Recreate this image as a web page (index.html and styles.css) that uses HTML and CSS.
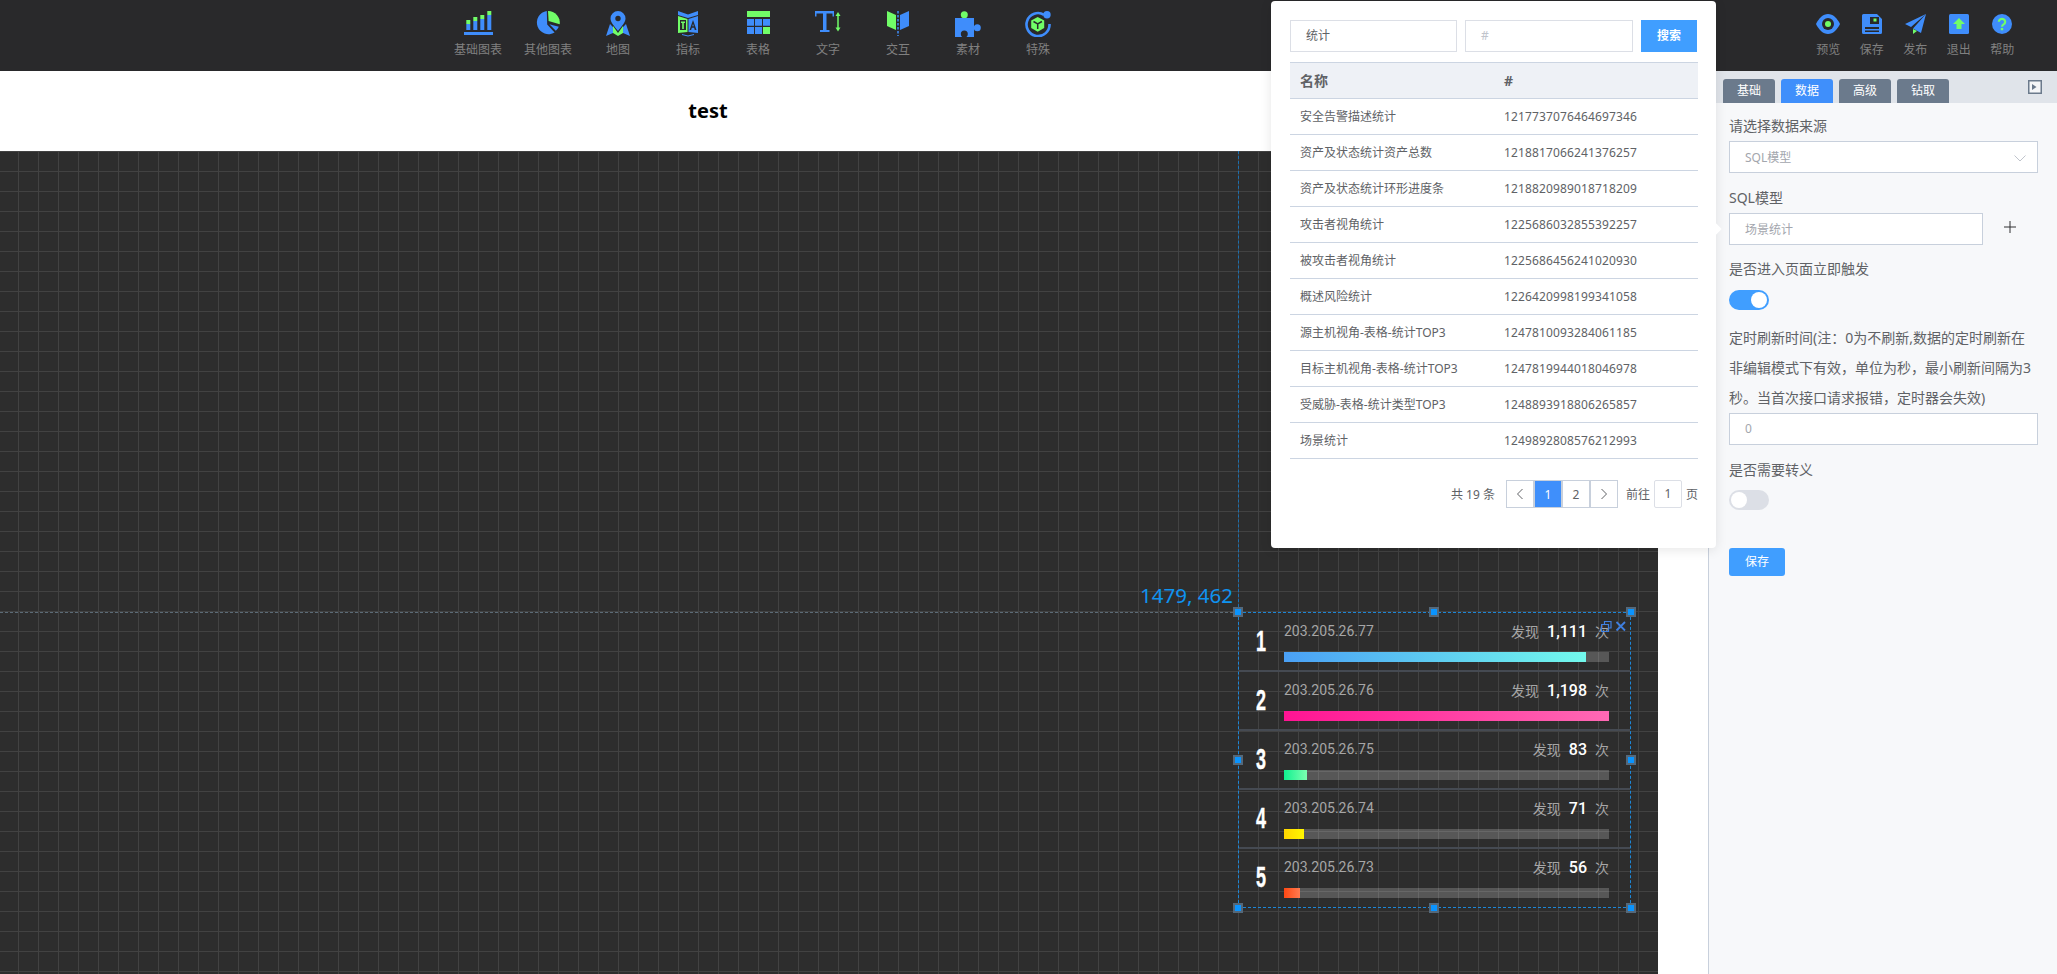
FILE: index.html
```html
<!DOCTYPE html>
<html lang="zh">
<head>
<meta charset="utf-8">
<title>test</title>
<link rel="stylesheet" href="styles.css">
</head>
<body>
<header class="topbar">
  <nav class="tools">
    <div class="tool"><svg class="ico" width="29" height="26" viewBox="0 0 29 26"><path class="g" d="M2.3 9h4v4h-4zM9.3 6h4v4h-4zM16.3 4h4v4h-4zM23.3 0h4v4h-4z"/><path class="b" d="M2.3 13h4v6h-4zM9.3 10h4v9h-4zM16.3 8h4v11h-4zM23.3 4h4v15h-4zM0 21h29v3H0z"/></svg><span>基础图表</span></div>
    <div class="tool"><svg class="ico" width="24" height="26" viewBox="0 0 24 26"><path class="b" d="M10.8 0A11.7 11.7 0 1 0 18.6 21.6L11.2 13.4z"/><path class="g" d="M12 0A11.7 11.7 0 0 1 23.7 13.2L12.6 10z"/><path class="b" d="M13.4 13.2L22.8 15.8A11.7 11.7 0 0 1 19.8 19.8z"/></svg><span>其他图表</span></div>
    <div class="tool"><svg class="ico" width="24" height="26" viewBox="0 0 24 26"><path class="b" d="M4 13L0 25l7-3 0-6zM20 13l4 12-7-3 0-6z"/><path class="g" d="M7 15l5 7 5-7v7l-5 3-5-3z"/><path class="b" d="M12 0a7.5 7.5 0 0 1 7.5 7.5c0 4-4 8-7.5 12.5C8.500 15.500 4.500 11.500 4.500 7.500A7.500 7.500 0 0 1 12 0z"/><circle class="d" cx="12" cy="7.500" r="2.700"/></svg><span>地图</span></div>
    <div class="tool"><svg class="ico" width="20" height="26" viewBox="0 0 20 26"><path class="b" d="M0 0l10 3.500L20 0v4L10 7 0 4z"/><path class="g" d="M0 5l9.500 3v13L0 22z"/><path class="b" d="M20 5l-9.500 3v13l9.500 1z"/><rect class="d" x="2" y="9" width="6" height="10"/><path class="g" d="M3 10.500h4v1.500H5.800v6H4.200v-6H3z"/><path class="d" d="M15 9l3.500 10h-1.700l-.7-2.200h-2.300l-.7 2.200h-1.500zM14.300 15.300h1.500L15 12.800z"/><path class="line-b" d="M4 23.500q6 3 12 0"/></svg><span>指标</span></div>
    <div class="tool"><svg class="ico" width="23" height="26" viewBox="0 0 23 26"><path class="g" d="M0 0h23v6H0zM16 16h7v7h-7z"/><path class="b" d="M0 8h7v6.700H0zM8 8h7v6.700H8zM16 8h7v6.700h-7zM0 16h7v7H0zM8 16h7v7H8z"/></svg><span>表格</span></div>
    <div class="tool"><svg class="ico" width="26" height="26" viewBox="0 0 26 26"><path class="b" d="M0 0h19v5.500h-1.500V2.500h-6V19h3v2H5v-2h3V2.500H1.500v3H0z"/><path class="line-g" d="M23 3v15"/><path class="g" d="M23 1l2.500 4h-5zM23 20.500l-2.500-4h5z"/></svg><span>文字</span></div>
    <div class="tool"><svg class="ico" width="22" height="26" viewBox="0 0 22 26"><path class="g" d="M0 0l9 4v15l-9-4z"/><path class="b" d="M22 0l-9 4v15l9-4z"/><path class="dash-b" d="M11 0v25"/></svg><span>交互</span></div>
    <div class="tool"><svg class="ico" width="26" height="26" viewBox="0 0 26 26"><circle class="g" cx="9.300" cy="3.700" r="3.500"/><path class="b" d="M0 7h19v19H0z"/><circle class="b" cx="22.300" cy="16.700" r="3.500"/><circle class="d" cx="9.300" cy="23" r="3.500"/></svg><span>素材</span></div>
    <div class="tool"><svg class="ico" width="26" height="26" viewBox="0 0 26 26"><path class="ring" d="M19 3.800A11.500 11.500 0 1 0 24.500 13"/><circle class="b" cx="22" cy="3.700" r="3.700"/><path class="g" d="M12.700 6l6.500 3.500v7.500l-6.500 3.700-6.500-3.700V9.500z"/><path class="line-d" d="M8.500 10.500l4.200 2.300 4.200-2.300M12.700 12.800v5.200"/></svg><span>特殊</span></div>
  </nav>
  <nav class="actions">
    <div class="action"><svg width="24" height="20" viewBox="0 0 24 20"><path class="b" d="M0 10C3 4 7 0 12 0s9 4 12 10c-3 6-7 10-12 10S3 16 0 10z"/><circle class="d" cx="12" cy="10" r="6"/><circle class="g" cx="12" cy="10" r="3"/></svg><span>预览</span></div>
    <div class="action"><svg width="20" height="20" viewBox="0 0 20 20"><path class="b" d="M1.500 0H15l5 5v13.500a1.500 1.500 0 0 1-1.500 1.500h-17A1.500 1.500 0 0 1 0 18.500v-17A1.500 1.500 0 0 1 1.500 0z"/><path class="d" d="M8 3h9v7H8zM3 13h14v2H3zM3 16.500h14v1.500H3z"/><rect class="g" x="11.500" y="4.500" width="3" height="3"/></svg><span>保存</span></div>
    <div class="action"><svg width="21" height="20" viewBox="0 0 21 20"><path class="b" d="M21 0L0 10l6 3zM21 0L8 14.500 16 19z"/><path class="g" d="M8 15v5l4-3z"/></svg><span>发布</span></div>
    <div class="action"><svg width="20" height="20" viewBox="0 0 20 20"><rect class="b" width="20" height="20" rx="1.500"/><path class="g" d="M10 4l6 6h-3.500v5h-5v-5H4z"/></svg><span>退出</span></div>
    <div class="action"><svg width="20" height="20" viewBox="0 0 20 20"><circle class="b" cx="10" cy="10" r="10"/><path class="line-help" d="M6.800 7.800a3.200 3 0 1 1 4.800 2.600c-1 .6-1.600 1.100-1.600 2.400"/><rect class="g" x="8.800" y="14" width="2.400" height="2.300"/></svg><span>帮助</span></div>
  </nav>
</header>

<main class="workspace">
  <section class="stage">
    <div class="title-band"><h1>test</h1></div>
    <div class="canvas">
      <div class="guide guide-v"></div>
      <div class="guide guide-h"></div>
      <div class="coords">1479, 462</div>
      <div class="widget">
        <div class="row">
          <div class="rank"><b>1</b></div>
          <div class="row-body">
            <div class="row-text"><span class="ip">203.205.26.77</span><span class="stat">发现<strong>1,111</strong>次</span></div>
            <div class="track"><div class="fill fill-1" style="width:93%"></div></div>
          </div>
        </div>
        <div class="row">
          <div class="rank"><b>2</b></div>
          <div class="row-body">
            <div class="row-text"><span class="ip">203.205.26.76</span><span class="stat">发现<strong>1,198</strong>次</span></div>
            <div class="track"><div class="fill fill-2" style="width:100%"></div></div>
          </div>
        </div>
        <div class="row">
          <div class="rank"><b>3</b></div>
          <div class="row-body">
            <div class="row-text"><span class="ip">203.205.26.75</span><span class="stat">发现<strong>83</strong>次</span></div>
            <div class="track"><div class="fill fill-3" style="width:7%"></div></div>
          </div>
        </div>
        <div class="row">
          <div class="rank"><b>4</b></div>
          <div class="row-body">
            <div class="row-text"><span class="ip">203.205.26.74</span><span class="stat">发现<strong>71</strong>次</span></div>
            <div class="track"><div class="fill fill-4" style="width:6%"></div></div>
          </div>
        </div>
        <div class="row">
          <div class="rank"><b>5</b></div>
          <div class="row-body">
            <div class="row-text"><span class="ip">203.205.26.73</span><span class="stat">发现<strong>56</strong>次</span></div>
            <div class="track"><div class="fill fill-5" style="width:5%"></div></div>
          </div>
        </div>
        <svg class="widget-tools" width="26" height="11" viewBox="0 0 26 11"><path class="wt" d="M3.500 3V.5h6.500v6.500H7.500M.5 3.500h7v7h-7z"/><path class="wt-x" d="M15.500 1l8.500 8.500M24 1l-8.500 8.500"/></svg>
        <i class="handle h-tl"></i><i class="handle h-tc"></i><i class="handle h-tr"></i>
        <i class="handle h-ml"></i><i class="handle h-mr"></i>
        <i class="handle h-bl"></i><i class="handle h-bc"></i><i class="handle h-br"></i>
      </div>
    </div>
  </section>
  <div class="gutter"></div>
  <aside class="panel">
    <div class="tabs">
      <div class="tab">基础</div>
      <div class="tab tab-on">数据</div>
      <div class="tab">高级</div>
      <div class="tab">钻取</div>
      <svg class="collapse" width="14" height="14" viewBox="0 0 14 14"><rect class="col-box" x=".75" y=".75" width="12.500" height="12.500"/><path class="col-tri" d="M4 4l4.500 3L4 10z"/></svg>
    </div>
    <form class="form">
      <div class="lbl">请选择数据来源</div>
      <div class="field field-select">SQL模型<svg width="12" height="7" viewBox="0 0 12 7"><path class="chev" d="M.5 .5L6 6l5.500-5.500"/></svg></div>
      <div class="lbl lbl-gap">SQL模型</div>
      <div class="sql-row">
        <div class="field field-sql">场景统计</div>
        <svg class="plus" width="12" height="12" viewBox="0 0 12 12"><path class="plus-s" d="M6 0v12M0 6h12"/></svg>
      </div>
      <div class="lbl lbl-trigger">是否进入页面立即触发</div>
      <div class="switch switch-on"><i></i></div>
      <p class="note">定时刷新时间(注：0为不刷新,数据的定时刷新在非编辑模式下有效，单位为秒，最小刷新间隔为3秒。当首次接口请求报错，定时器会失效)</p>
      <div class="field">0</div>
      <div class="lbl lbl-gap2">是否需要转义</div>
      <div class="switch"><i></i></div>
      <div class="save">保存</div>
    </form>
  </aside>
</main>

<div class="popup">
  <div class="search">
    <div class="sinput sinput-a">统计</div>
    <div class="sinput sinput-b">#</div>
    <div class="sbtn">搜索</div>
  </div>
  <div class="table">
    <div class="tr th"><span>名称</span><span>#</span></div>
    <div class="tr"><span>安全告警描述统计</span><span class="num">1217737076464697346</span></div>
    <div class="tr"><span>资产及状态统计资产总数</span><span class="num">1218817066241376257</span></div>
    <div class="tr"><span>资产及状态统计环形进度条</span><span class="num">1218820989018718209</span></div>
    <div class="tr"><span>攻击者视角统计</span><span class="num">1225686032855392257</span></div>
    <div class="tr"><span>被攻击者视角统计</span><span class="num">1225686456241020930</span></div>
    <div class="tr"><span>概述风险统计</span><span class="num">1226420998199341058</span></div>
    <div class="tr"><span>源主机视角-表格-统计TOP3</span><span class="num">1247810093284061185</span></div>
    <div class="tr"><span>目标主机视角-表格-统计TOP3</span><span class="num">1247819944018046978</span></div>
    <div class="tr"><span>受威胁-表格-统计类型TOP3</span><span class="num">1248893918806265857</span></div>
    <div class="tr"><span>场景统计</span><span class="num">1249892808576212993</span></div>
  </div>
  <div class="pager">
    <span class="total">共 19 条</span>
    <div class="pg"><svg width="8" height="12" viewBox="0 0 8 12"><path class="pg-a" d="M6.500 1L1.500 6l5 5"/></svg></div>
    <div class="pg pg-on">1</div>
    <div class="pg">2</div>
    <div class="pg"><svg width="8" height="12" viewBox="0 0 8 12"><path class="pg-a" d="M1.500 1l5 5-5 5"/></svg></div>
    <span class="goto">前往</span>
    <div class="pg-input">1</div>
    <span class="page-word">页</span>
  </div>
  <i class="arrow"></i>
</div>
</body>
</html>
```
FILE: styles.css
```css
* { box-sizing: border-box; }
html, body { margin: 0; padding: 0; height: 974px; overflow: hidden; }
body {
  position: relative;
  background: #fff;
  font-family: "Noto Sans", "Noto Sans CJK SC", sans-serif;
  font-size: 12px;
  color: #606266;
}

/* svg palette */
.b { fill: #3f8dfb; }
.g { fill: #71fd68; }
.d { fill: #29292b; }
.line-b { fill: none; stroke: #3f8dfb; stroke-width: 1; }
.line-g { fill: none; stroke: #71fd68; stroke-width: 1.5; }
.dash-b { fill: none; stroke: #3f8dfb; stroke-width: 1.5; stroke-dasharray: 2.500 1.500; }
.line-d { fill: none; stroke: #29292b; stroke-width: 1.5; }
.ring { fill: none; stroke: #3f8dfb; stroke-width: 2.600; }
.line-help { fill: none; stroke: #71fd68; stroke-width: 2.200; }

/* top bar */
.topbar {
  height: 71px;
  background: #29292b;
  display: flex;
  justify-content: space-between;
  padding: 0 33px 0 443px;
}
.tools, .actions { display: flex; }
.tool, .action {
  display: flex;
  flex-direction: column;
  align-items: center;
  color: #808080;
  line-height: 16px;
}
.tool { width: 70px; padding-top: 11px; }
.tool span { margin-top: 5px; }
.ico { display: block; }
.action { width: 43.500px; padding-top: 14px; }
.action svg { display: block; }
.action span { margin-top: 8px; }

/* workspace */
.workspace { display: flex; height: 903px; }
.stage { width: 1658px; display: flex; flex-direction: column; }
.title-band {
  height: 80px;
  display: flex;
  align-items: center;
  justify-content: center;
  padding-right: 242px;
}
.title-band h1 { margin: 0; font-size: 20px; line-height: 28px; font-weight: 700; color: #000; }
.canvas {
  position: relative;
  flex: 1;
  background-color: #2d2d2d;
  background-image:
    linear-gradient(to right, #424242 1px, transparent 1px),
    linear-gradient(to bottom, #424242 1px, transparent 1px);
  background-size: 20px 20px;
  background-position: 18px 0, 0 0;
}
.gutter { width: 50px; background: #fff; }

/* guides */
.guide { position: absolute; }
.guide-v { left: 1238px; top: 0; height: 461px; border-left: 1px dashed #1c6fae; }
.guide-h { left: 0; top: 461px; width: 1238px; border-top: 1px dashed #5b6a76; }
.coords {
  position: absolute;
  left: 1140px;
  top: 430px;
  font-size: 20.500px;
  line-height: 28px;
  color: #0f93f0;
}

/* widget */
.widget {
  position: absolute;
  left: 1238px;
  top: 461px;
  width: 393px;
  height: 296px;
  border: 1px dashed #1d86d6;
  color: #a6a6a6;
}
.row {
  height: 59px;
  display: flex;
  border-bottom: 2px solid #454a52;
}
.row:last-of-type { border-bottom-color: transparent; }
.rank {
  width: 45px;
  display: flex;
  align-items: center;
  justify-content: center;
  padding-bottom: 2px;
}
.rank b {
  font-family: "Liberation Sans", sans-serif;
  font-size: 29px;
  line-height: 32px;
  font-weight: 700;
  color: #fff;
  -webkit-text-stroke: .4px #fff;
  transform: scaleX(.62);
}
.row-body { width: 325px; }
.row-text {
  display: flex;
  justify-content: space-between;
  align-items: center;
  height: 20px;
  margin-top: 8px;
  font-family: Roboto, "Noto Sans CJK SC", sans-serif;
  font-size: 14px;
}
.stat { display: flex; align-items: center; }
.stat strong { margin: 0 8px; font-size: 16px; font-weight: 500; color: #fff; }
.track { height: 10px; margin-top: 11px; background: rgba(255,255,255,.2); }
.fill { height: 100%; }
.fill-1 { background: linear-gradient(to right, #4aa0f6, #72f9ec); }
.fill-2 { background: linear-gradient(to right, #ff1493, #ff69b4); }
.fill-3 { background: linear-gradient(to right, #10f090, #7cffb0); }
.fill-4 { background: linear-gradient(to right, #ffd500, #fff700); }
.fill-5 { background: linear-gradient(to right, #ff4813, #ff7b50); }
.widget-tools { position: absolute; top: 8px; right: 3px; }
.wt { fill: none; stroke: #3f7fe0; stroke-width: 1.200; }
.wt-x { fill: none; stroke: #3f7fe0; stroke-width: 1.800; }
.handle {
  position: absolute;
  width: 10px;
  height: 10px;
  background: #0a94ff;
  border: 2px solid #54687a;
}
.h-tl { left: -6px; top: -6px; }
.h-tc { left: 190px; top: -6px; }
.h-tr { right: -6px; top: -6px; }
.h-ml { left: -6px; top: 142px; }
.h-mr { right: -6px; top: 142px; }
.h-bl { left: -6px; bottom: -6px; }
.h-bc { left: 190px; bottom: -6px; }
.h-br { right: -6px; bottom: -6px; }

/* side panel */
.panel {
  flex: 1;
  position: relative;
  background: #f7f8fa;
  border-left: 1px solid #c8d0dc;
}
.tabs {
  height: 32px;
  background: #e0e4ea;
  display: flex;
  align-items: flex-start;
  padding: 8px 15px 0 14px;
  gap: 6px;
}
.tab {
  width: 52px;
  height: 24px;
  line-height: 24px;
  text-align: center;
  color: #fff;
  background: #6b7a8c;
  border-radius: 3px 3px 0 0;
}
.tab-on { background: #3f8ffb; }
.collapse { margin: 1px 0 0 auto; }
.col-box { fill: #f5f6f8; stroke: #6b7a8c; stroke-width: 1.500; }
.col-tri { fill: #6b7a8c; }
.form { padding: 13px 19px 0 20px; }
.lbl { font-size: 14px; line-height: 20px; margin-bottom: 5px; }
.lbl-gap { margin-top: 15px; margin-bottom: 5px; }
.lbl-trigger { margin-top: 14px; margin-bottom: 11px; }
.lbl-gap2 { margin-top: 15px; margin-bottom: 10px; }
.field {
  height: 32px;
  line-height: 30px;
  padding: 0 15px;
  background: #fff;
  border: 1px solid #c8d0dc;
  color: #a3a6ad;
}
.field-select { display: flex; align-items: center; justify-content: space-between; padding: 2px 11px 0 15px; }
.chev { fill: none; stroke: #c0c4cc; stroke-width: 1; }
.sql-row { display: flex; align-items: center; }
.field-sql { width: 254px; line-height: 32px; }
.plus { margin: 0 0 5px 21px; }
.plus-s { fill: none; stroke: #303133; stroke-width: 1; }
.switch {
  width: 40px;
  height: 20px;
  border-radius: 10px;
  background: #dcdfe6;
  position: relative;
}
.switch i {
  position: absolute;
  left: 2px;
  top: 2px;
  width: 16px;
  height: 16px;
  border-radius: 50%;
  background: #fff;
}
.switch-on { background: #409eff; }
.switch-on i { left: 22px; }
.note { margin: 13px 0 0; font-size: 14px; line-height: 30px; }
.save {
  width: 56px;
  height: 28px;
  margin-top: 38px;
  line-height: 28px;
  text-align: center;
  border-radius: 3px;
  background: #409eff;
  color: #fff;
}

/* popup */
.popup {
  position: absolute;
  left: 1271px;
  top: 1px;
  width: 445px;
  height: 547px;
  padding: 19px 18px 0 19px;
  background: #fff;
  border-radius: 4px;
  box-shadow: 0 2px 12px rgba(0,0,0,.1);
}
.search { display: flex; gap: 8px; }
.sinput {
  height: 32px;
  line-height: 30px;
  padding: 0 15px;
  border: 1px solid #dcdfe6;
  color: #606266;
}
.sinput-a { width: 167px; }
.sinput-b { width: 168px; color: #c0c4cc; }
.sbtn {
  width: 56px;
  height: 32px;
  line-height: 32px;
  text-align: center;
  background: #409eff;
  color: #fff;
  font-weight: 700;
}
.table { margin-top: 10px; border-top: 1px solid #ccd5e2; }
.tr {
  display: flex;
  height: 36px;
  align-items: center;
  padding: 0 0 1px 10px;
  border-bottom: 1px solid #ccd5e2;
}
.tr span:first-child { width: 204px; }
.num { letter-spacing: .14px; }
.th { height: 36px; background: #eef1f6; font-size: 14px; font-weight: 700; }
.pager {
  margin-top: 21px;
  height: 28px;
  display: flex;
  align-items: center;
}
.total { margin-left: 161px; width: 55px; }
.pg {
  width: 28px;
  height: 28px;
  display: flex;
  align-items: center;
  justify-content: center;
  border: 1px solid #c8d0dc;
}
.pg-on { background: #3f8ffb; color: #fff; }
.pg-a { fill: none; stroke: #606266; stroke-width: 1; }
.goto { margin: 0 4px 0 8px; }
.pg-input {
  width: 28px;
  height: 28px;
  line-height: 26px;
  text-align: center;
  border: 1px solid #dcdfe6;
  border-radius: 2px;
}
.page-word { margin-left: 4px; }
.arrow {
  position: absolute;
  right: -4px;
  top: 224px;
  width: 8px;
  height: 8px;
  background: #fff;
  transform: rotate(45deg);
}
```
